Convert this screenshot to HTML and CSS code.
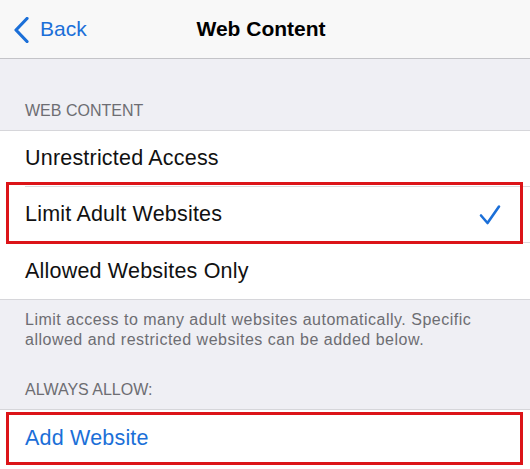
FILE: index.html
```html
<!DOCTYPE html>
<html lang="en">
<head>
    <meta charset="UTF-8">
    <meta name="viewport" content="width=device-width, initial-scale=1.0">
    <title>Web Content</title>
    <link rel="stylesheet" href="styles.css">
</head>
<body>
    <div class="nav-bar">
        <a href="#" class="back-link">
            <svg class="chevron" width="16" height="26" viewBox="0 0 16 26">
                <path d="M13 1.5 L2 13 L13 24.5" fill="none" stroke="currentColor" stroke-width="3.2" stroke-linecap="round" stroke-linejoin="round"/>
            </svg>
            <span>Back</span>
        </a>
        <div class="nav-title">Web Content</div>
        <div></div>
    </div>

    <div class="section-header first">WEB CONTENT</div>
    <div class="list">
        <div class="row">Unrestricted Access</div>
        <div class="row highlight">
            <span>Limit Adult Websites</span>
            <svg class="check" width="22" height="22" viewBox="0 0 22 22">
                <path d="M2 11.5 L8.5 19 L20 2.5" fill="none" stroke="currentColor" stroke-width="2.6" stroke-linecap="round" stroke-linejoin="round"/>
            </svg>
        </div>
        <div class="row">Allowed Websites Only</div>
    </div>
    <p class="section-footer">Limit access to many adult websites automatically. Specific allowed and restricted websites can be added below.</p>

    <div class="section-header">ALWAYS ALLOW:</div>
    <div class="list last">
        <div class="row link highlight add-row">Add Website</div>
    </div>
</body>
</html>
```

FILE: styles.css
```css
body {
    margin: 0;
    font-family: "Liberation Sans", Arial, sans-serif;
    background-color: #efeff4;
    color: #111111;
    overflow: hidden;
}
.nav-bar {
    display: grid;
    grid-template-columns: 1fr auto 1fr;
    align-items: center;
    height: 58px;
    background-color: #f8f8f8;
    border-bottom: 1px solid #c4c4c8;
}
.back-link {
    display: flex;
    align-items: center;
    gap: 10px;
    padding-left: 14px;
    color: #1b6fd8;
    text-decoration: none;
    font-size: 21px;
}
.chevron {
    margin-top: 1px;
}
.nav-title {
    font-size: 21px;
    font-weight: bold;
    color: #000000;
    padding-right: 8px;
}
.section-header {
    font-size: 16px;
    line-height: 20px;
    color: #6d6d72;
    padding: 30px 25px 9px;
}
.section-header.first {
    padding-top: 42px;
}
.list {
    background-color: #ffffff;
    border-top: 1px solid #d6d6da;
    border-bottom: 1px solid #d6d6da;
}
.list.last {
    border-bottom: none;
    padding-bottom: 20px;
}
.row {
    position: relative;
    display: flex;
    align-items: center;
    justify-content: space-between;
    box-sizing: border-box;
    height: 56px;
    margin-left: 25px;
    padding-right: 29px;
    font-size: 21.5px;
    letter-spacing: 0.2px;
    color: #111111;
    border-bottom: 1px solid #dcdcdf;
}
.row:last-child {
    border-bottom: none;
}
.row.link {
    color: #1b6fd8;
}
.check {
    color: #1b6fd8;
}
/* red annotation boxes */
.highlight::after {
    content: "";
    position: absolute;
    top: -5px;
    bottom: -2px;
    left: -19px;
    right: 7px;
    border: 3px solid #dc1418;
}
.add-row::after {
    top: 2px;
    bottom: 1px;
}
.section-footer {
    margin: 0;
    padding: 10px 25px 0;
    font-size: 16px;
    line-height: 20px;
    letter-spacing: 0.5px;
    color: #6d6d72;
}
```
